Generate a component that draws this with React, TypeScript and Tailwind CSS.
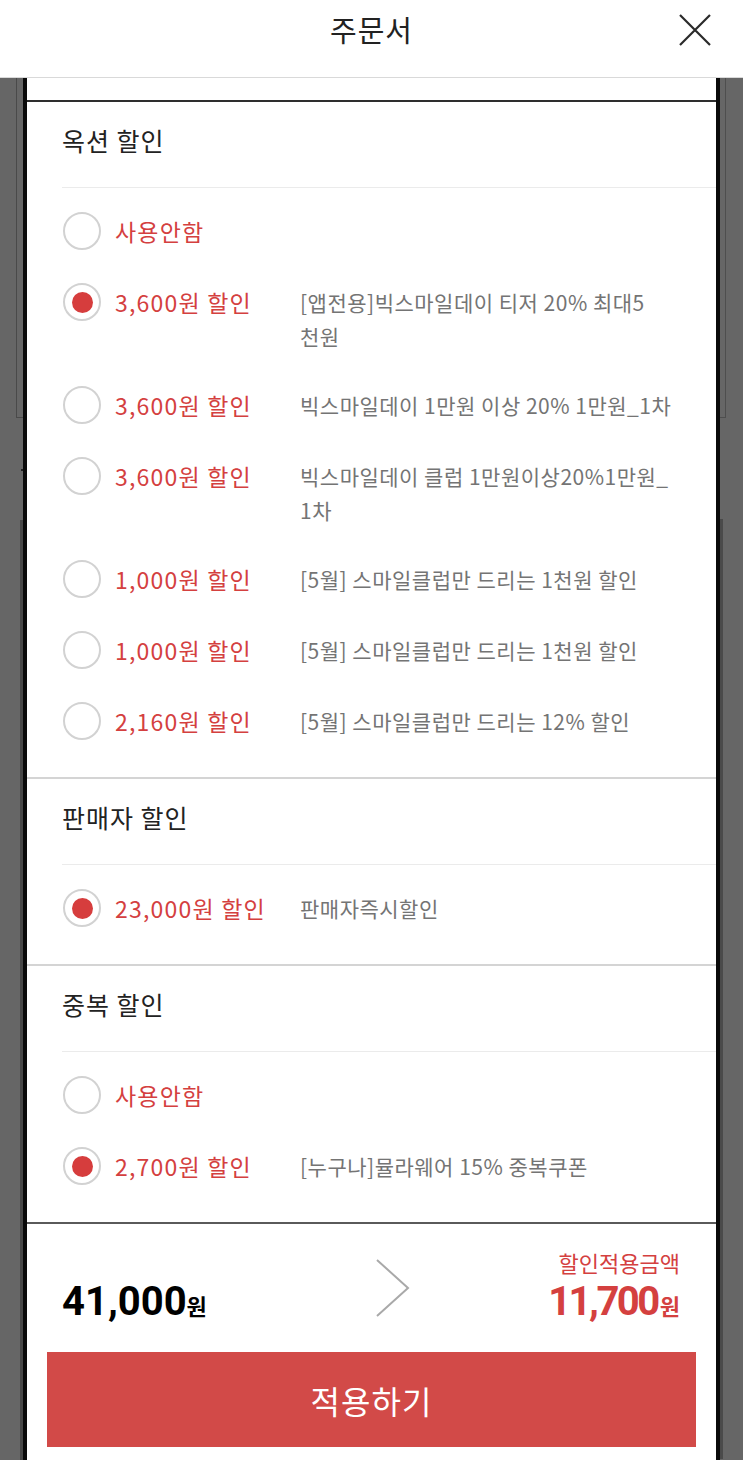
import React from "react";

type Item = { amount: string; lines?: string[]; checked?: boolean };

function Radio({ checked }: { checked?: boolean }) {
  return (
    <span className="mt-[1px] flex h-[38px] w-[38px] shrink-0 items-center justify-center rounded-full border-2 border-[#d2d2d2] bg-white">
      {checked && <span className="h-[21px] w-[21px] rounded-full bg-[#d63d3d]" />}
    </span>
  );
}

function Row({ item }: { item: Item }) {
  return (
    <div className="flex items-start">
      <Radio checked={item.checked} />
      <div className="ml-[14px] mt-[3px] w-[185px] shrink-0 whitespace-nowrap text-[23px] leading-[34px] tracking-[1.2px] text-[#d4403f]">
        {item.amount}
      </div>
      {item.lines && (
        <div className="mt-[3px] text-[21px] leading-[34px] tracking-[0.5px] text-[#747474]">
          {item.lines.map((l, i) => (
            <div key={i} className="whitespace-nowrap">
              {l}
            </div>
          ))}
        </div>
      )}
    </div>
  );
}

function Section({ title, items, last }: { title: string; items: Item[]; last?: boolean }) {
  return (
    <div className={last ? "" : "border-b-2 border-[#d4d4d4]"}>
      <div className="pl-[35px] pt-[21px] pb-[30px] text-[25px] leading-[34px] tracking-[1px] text-[#222]">{title}</div>
      <div className="ml-[35px] h-px bg-[#ebebeb]" />
      <div className="flex flex-col gap-[32px] pl-[36px] pt-[23px] pb-[37px]">
        {items.map((it, i) => (
          <Row key={i} item={it} />
        ))}
      </div>
    </div>
  );
}

function SideLeft() {
  return (
    <div className="relative w-[23px] shrink-0 bg-[#666666]">
      <div className="ml-[16px] h-[340px] border-b border-l border-[#4a4a4a]" />
      <div className="ml-[21px] mt-[51px] h-[2px] w-[2px] bg-[#222]" />
      <div className="ml-[20px] mt-[49px] h-[940px] w-[3px] bg-[#474747]" />
    </div>
  );
}

function SideRight() {
  return (
    <div className="w-[23px] shrink-0 bg-[#666666]">
      <div className="h-[340px] w-[6px] border-b border-r border-[#4e4e4e]" />
      <div className="mt-[101px] h-[940px] w-[3px] bg-[#4a4a4a]" />
    </div>
  );
}

export default function App() {
  const s1: Item[] = [
    { amount: "사용안함" },
    { amount: "3,600원 할인", checked: true, lines: ["[앱전용]빅스마일데이 티저 20% 최대5", "천원"] },
    { amount: "3,600원 할인", lines: ["빅스마일데이 1만원 이상 20% 1만원_1차"] },
    { amount: "3,600원 할인", lines: ["빅스마일데이 클럽 1만원이상20%1만원_", "1차"] },
    { amount: "1,000원 할인", lines: ["[5월] 스마일클럽만 드리는 1천원 할인"] },
    { amount: "1,000원 할인", lines: ["[5월] 스마일클럽만 드리는 1천원 할인"] },
    { amount: "2,160원 할인", lines: ["[5월] 스마일클럽만 드리는 12% 할인"] },
  ];
  const s2: Item[] = [{ amount: "23,000원 할인", checked: true, lines: ["판매자즉시할인"] }];
  const s3: Item[] = [
    { amount: "사용안함" },
    { amount: "2,700원 할인", checked: true, lines: ["[누구나]뮬라웨어 15% 중복쿠폰"] },
  ];

  return (
    <div className="h-[1460px] w-[743px] overflow-hidden bg-[#666666] font-['Noto_Sans_CJK_KR','Noto_Sans',sans-serif]">
      <header className="relative h-[78px] border-b border-[#d9d9d9] bg-white">
        <div className="flex h-[60px] items-center justify-center text-[29px] tracking-[1px] text-[#222]">주문서</div>
        <svg
          className="absolute right-[32px] top-[14px]"
          width="32"
          height="32"
          viewBox="0 0 32 32"
          fill="none"
          stroke="#2a2a2a"
          strokeWidth="2.2"
        >
          <path d="M1 1 L31 31 M31 1 L1 31" />
        </svg>
      </header>
      <div className="flex h-[1382px]">
        <SideLeft />
        <div className="flex flex-1 flex-col border-x-4 border-[#0a0a0a] bg-white">
          <div className="h-[24px] border-b-2 border-[#2e2e2e]" />
          <Section title="옥션 할인" items={s1} />
          <Section title="판매자 할인" items={s2} />
          <Section title="중복 할인" items={s3} last />
          <div className="border-t-2 border-[#5a5a5a]">
            <div className="flex pl-[35px] pr-[36px] pt-[24px]">
              <div className="flex w-[314px] items-end self-end text-black">
                <span className="font-['Roboto',sans-serif] text-[40px] font-bold leading-[52px] tracking-[0px]">41,000</span>
                <span className="mb-[6px] text-[22px] font-bold leading-[34px]">원</span>
              </div>
              <svg className="self-center" width="34" height="58" viewBox="0 0 34 58" fill="none" stroke="#a9a9a9" strokeWidth="2">
                <path d="M1 1 L32 29 L1 57" />
              </svg>
              <div className="flex flex-1 flex-col items-end">
                <div className="text-[22px] leading-[28px] text-[#d4403f]">할인적용금액</div>
                <div className="flex items-end text-[#d4403f]">
                  <span className="font-['Roboto',sans-serif] text-[40px] font-bold leading-[52px] tracking-[-2.5px]">11,700</span>
                  <span className="mb-[6px] ml-[2px] text-[22px] font-bold leading-[34px]">원</span>
                </div>
              </div>
            </div>
            <div className="mx-[20px] mt-[24px] flex h-[95px] items-center justify-center bg-[#d24a48] text-[32px] tracking-[1px] text-white">
              적용하기
            </div>
          </div>
        </div>
        <SideRight />
      </div>
    </div>
  );
}
